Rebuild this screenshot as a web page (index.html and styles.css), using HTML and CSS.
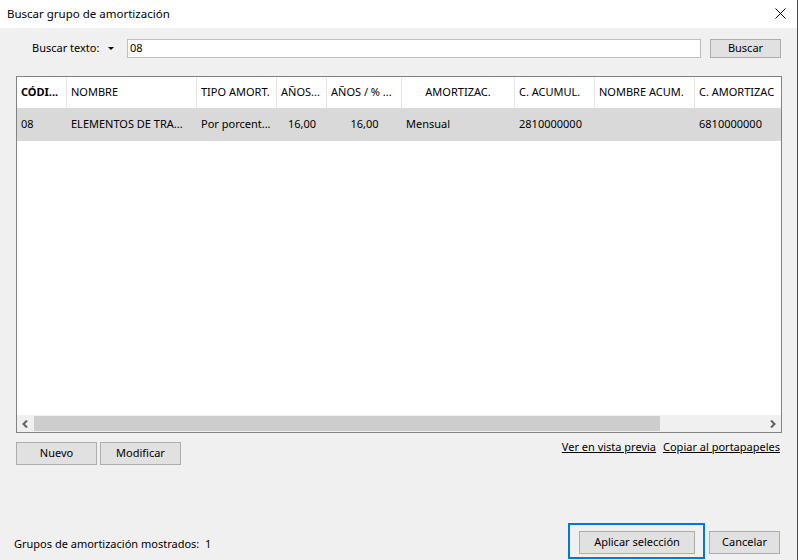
FILE: index.html
```html
<!DOCTYPE html>
<html lang="es">
<head>
<meta charset="utf-8">
<title>Buscar grupo de amortización</title>
<link rel="stylesheet" href="styles.css">
</head>
<body>
<div class="window">
  <div class="titlebar">
    <span class="title">Buscar grupo de amortización</span>
    <svg class="close" width="11" height="11" viewBox="0 0 11 11"><path d="M0.5 0.5 L10.5 10.5 M10.5 0.5 L0.5 10.5" stroke="#000" stroke-width="1" fill="none"/></svg>
  </div>
  <div class="content">
    <div class="search">
      <span class="search-label">Buscar texto:</span>
      <span class="caret"></span>
      <div class="input">08</div>
      <div class="btn btn-buscar">Buscar</div>
    </div>
    <div class="grid">
      <div class="grid-body">
        <div class="row header">
          <div class="cell c1 bold">CÓDI...</div>
          <div class="cell c2">NOMBRE</div>
          <div class="cell c3">TIPO AMORT.</div>
          <div class="cell c4">AÑOS...</div>
          <div class="cell c5">AÑOS / % ...</div>
          <div class="cell c6 center">AMORTIZAC.</div>
          <div class="cell c7">C. ACUMUL.</div>
          <div class="cell c8">NOMBRE ACUM.</div>
          <div class="cell c9">C. AMORTIZAC</div>
        </div>
        <div class="row selected">
          <div class="cell c1">08</div>
          <div class="cell c2">ELEMENTOS DE TRA...</div>
          <div class="cell c3">Por porcent...</div>
          <div class="cell c4 center">16,00</div>
          <div class="cell c5 center">16,00</div>
          <div class="cell c6">Mensual</div>
          <div class="cell c7">2810000000</div>
          <div class="cell c8"></div>
          <div class="cell c9">6810000000</div>
        </div>
      </div>
      <div class="hscroll">
        <div class="arrow"><svg width="7" height="8" viewBox="0 0 7 8"><path d="M5 0.5 L1.5 4 L5 7.5" stroke="#606060" stroke-width="2" fill="none"/></svg></div>
        <div class="track"><div class="thumb"></div></div>
        <div class="arrow"><svg width="7" height="8" viewBox="0 0 7 8"><path d="M2 0.5 L5.5 4 L2 7.5" stroke="#606060" stroke-width="2" fill="none"/></svg></div>
      </div>
    </div>
    <div class="actions">
      <div class="action-buttons">
        <div class="btn btn-small">Nuevo</div>
        <div class="btn btn-small">Modificar</div>
      </div>
      <div class="links">
        <a class="link">Ver en vista previa</a>
        <a class="link">Copiar al portapapeles</a>
      </div>
    </div>
    <div class="footer">
      <span class="status">Grupos de amortización mostrados:&nbsp; 1</span>
      <div class="footer-buttons">
        <div class="focus"><div class="btn btn-apply">Aplicar selección</div></div>
        <div class="btn btn-cancel">Cancelar</div>
      </div>
    </div>
  </div>
</div>
</body>
</html>
```

FILE: styles.css
```css
* { box-sizing: border-box; }
html, body { margin: 0; padding: 0; }
body {
  font-family: "Noto Sans", "Open Sans", sans-serif;
  font-size: 11px;
  color: #000;
  background: #f0f0f0;
}
.window {
  width: 798px;
  height: 560px;
  display: flex;
  flex-direction: column;
  border-right: 1px solid #4d4d4d;
  overflow: hidden;
}
.titlebar {
  height: 28px;
  background: #fff;
  display: flex;
  align-items: center;
  padding-left: 7px;
  padding-right: 11px;
  padding-bottom: 2px;
  flex: none;
}
.title { font-size: 11.5px; flex: 1; }
.close { display: block; }
.content {
  flex: 1;
  display: flex;
  flex-direction: column;
  background: #f0f0f0;
}
.search {
  display: flex;
  align-items: center;
  margin-top: 10px;
  height: 20px;
  padding-left: 32px;
}
.search-label { width: 76px; padding-bottom: 1px; }
.caret {
  width: 0;
  height: 0;
  border-left: 3px solid transparent;
  border-right: 3px solid transparent;
  border-top: 3px solid #000;
  margin-right: 13px;
}
.input {
  width: 574px;
  height: 19px;
  margin-top: 1px;
  background: #fff;
  border: 1px solid #bfbfbf;
  padding-left: 2px;
  line-height: 16px;
}
.btn {
  background: #e1e1e1;
  border: 1px solid #adadad;
  display: flex;
  align-items: center;
  justify-content: center;
  padding-bottom: 2px;
}
.btn-buscar {
  width: 71px;
  height: 19px;
  margin-left: 9px;
}
.grid {
  margin: 18px 0 0 16px;
  width: 766px;
  height: 357px;
  border: 1px solid #828282;
  background: #fff;
  display: flex;
  flex-direction: column;
}
.grid-body { flex: 1; overflow: hidden; }
.row { display: flex; white-space: nowrap; }
.header { height: 31px; }
.selected { height: 33px; background: #d9d9d9; }
.cell {
  flex: none;
  padding-left: 4px;
  padding-bottom: 2px;
  display: flex;
  align-items: center;
  overflow: hidden;
}
.header .cell { border-right: 1px solid #e5e5e5; padding-bottom: 3px; }
.header .c9 { border-right: none; }
.bold { font-weight: bold; }
.center { justify-content: center; padding-left: 0; }
.c1 { width: 50px; }
.c2 { width: 130px; }
.c3 { width: 80px; }
.c4 { width: 50px; }
.c5 { width: 75px; }
.c6 { width: 113px; }
.c7 { width: 80px; }
.c8 { width: 100px; }
.c9 { width: 86px; }
.hscroll {
  height: 17px;
  display: flex;
  background: #f0f0f0;
  flex: none;
}
.arrow {
  width: 17px;
  display: flex;
  align-items: center;
  justify-content: center;
}
.track { flex: 1; padding: 1px 0; }
.thumb { width: 626px; height: 15px; background: #cdcdcd; }
.actions {
  display: flex;
  justify-content: space-between;
  align-items: flex-start;
  margin-top: 9px;
  padding: 0 17px 0 16px;
}
.action-buttons { display: flex; gap: 3px; }
.btn-small { width: 81px; height: 23px; }
.links { display: flex; gap: 7px; margin-top: -3px; line-height: 15px; }
.link { color: #000; text-decoration: underline; }
.footer {
  margin-top: auto;
  margin-bottom: 1px;
  height: 36px;
  display: flex;
  justify-content: space-between;
  align-items: flex-end;
  padding: 0 17px 0 14px;
}
.status { line-height: 16px; margin-bottom: 7px; }
.footer-buttons { display: flex; align-items: flex-end; gap: 4px; }
.focus {
  border: 2px solid #0078d7;
  padding: 6px 8px 3px 9px;
}
.btn-apply { width: 116px; height: 23px; }
.btn-cancel { width: 71px; height: 23px; margin-bottom: 5px; }
```
